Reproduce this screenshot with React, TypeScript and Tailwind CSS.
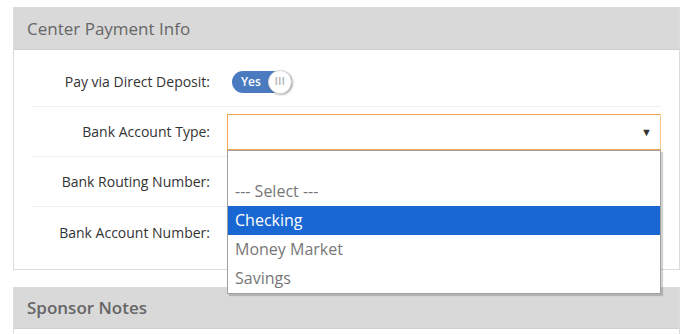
import React from "react";

const font = { fontFamily: '"Open Sans", "Noto Sans", sans-serif' };

function Row({ label, children, last }: { label: string; children?: React.ReactNode; last?: boolean }) {
  return (
    <div
      className={`flex h-[50px] items-center ${last ? "" : "border-b border-dotted border-[#dfe5ec]"}`}
    >
      <div className="w-[178px] shrink-0 text-right text-[14px] text-[#333]">{label}</div>
      <div className="relative ml-[17px] flex h-full flex-1 items-center">{children}</div>
    </div>
  );
}

export default function App() {
  return (
    <div className="h-[334px] w-[688px] overflow-hidden bg-white pl-[13px] pr-[8px] pt-[7px]" style={font}>
      <div className="border border-[#dcdcdc]">
        <div className="flex h-[42px] items-center border-b border-[#d0d0d0] bg-[#d9d9d9] pl-[13px] text-[17px] font-medium text-[#666]">
          Center Payment Info
        </div>
        <div className="px-[18px] pb-[12px] pt-[7px]">
          <Row label="Pay via Direct Deposit:">
            <div className="relative ml-[5px] flex h-[22px] w-[60px] items-center rounded-full bg-[#4a7bc1]">
              <span className="pl-[9px] text-[12px] font-semibold text-white">Yes</span>
              <div className="absolute right-0 top-1/2 flex h-[24px] w-[24px] -translate-y-1/2 items-center justify-center rounded-full border border-[#d8d8d8] bg-white shadow-[1px_1px_2px_rgba(0,0,0,0.3)]">
                <span className="text-[10px] font-semibold tracking-[0.5px] text-[#aaa]">III</span>
              </div>
            </div>
          </Row>
          <Row label="Bank Account Type:">
            <div className="relative z-10 flex h-[36px] w-full items-center justify-end border border-[#f5a651] border-r-[#fcc890] bg-white pr-[8px]">
              <span className="text-[11px] leading-none text-[#333]">▼</span>
              <div className="absolute left-[-1px] right-[-1px] top-[35px] border border-[#a0a0a0] bg-white text-[16px] text-[#777] shadow-[2px_2px_1px_rgba(0,0,0,0.18)]">
                <div className="h-[26px]" />
                <div className="flex h-[29px] items-center pl-[7px]">--- Select ---</div>
                <div className="flex h-[29px] items-center bg-[#1967d2] pl-[7px] text-white">Checking</div>
                <div className="flex h-[29px] items-center pl-[7px]">Money Market</div>
                <div className="flex h-[29px] items-center pl-[7px]">Savings</div>
              </div>
            </div>
          </Row>
          <Row label="Bank Routing Number:" />
          <Row label="Bank Account Number:" last />
        </div>
      </div>
      <div className="mt-[17px] border border-[#dcdcdc]">
        <div className="flex h-[41px] items-center border-b border-[#d0d0d0] bg-[#d9d9d9] pl-[13px] text-[17px] font-semibold text-[#666]">
          Sponsor Notes
        </div>
        <div className="h-[40px]" />
      </div>
    </div>
  );
}
